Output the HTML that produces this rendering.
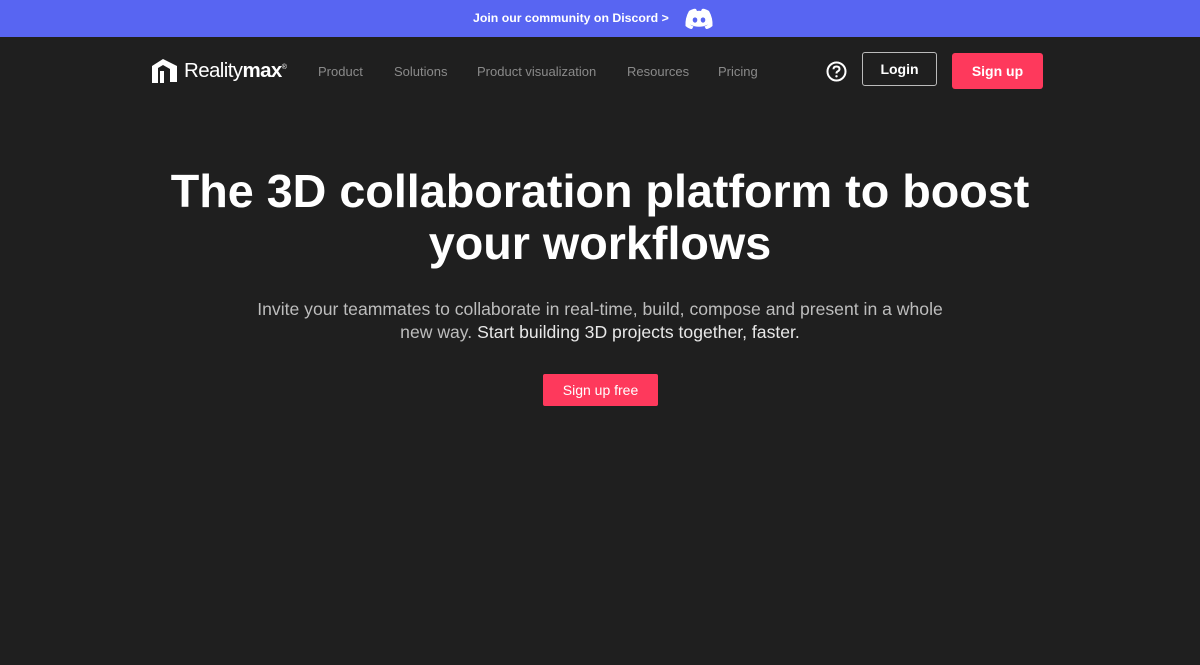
<!DOCTYPE html>
<html><head><meta charset="utf-8"><style>
*{margin:0;padding:0;box-sizing:border-box}
body{width:1200px;height:665px;background:#1f1f1f;font-family:"Liberation Sans",sans-serif;overflow:hidden;color:#fff;position:relative}
.top{height:37px;background:#5865f2;position:relative}
.top span{position:absolute;left:473px;top:11px;font-size:12.3px;font-weight:bold;color:#fff;white-space:nowrap}
.top svg{position:absolute;left:684px;top:8px}
nav{position:absolute;top:37px;left:0;width:1200px;height:68px}
.logo{position:absolute;left:151px;top:21px;display:flex;align-items:center;gap:5px;font-size:20.5px;letter-spacing:-0.6px}
.links a{position:absolute;top:27px;font-size:13px;color:#8a8a8a;text-decoration:none}
.help{position:absolute;left:826px;top:24px}
.login{position:absolute;left:862px;top:15px;width:75px;height:34px;border:1px solid #bbb;border-radius:3px;display:flex;align-items:center;justify-content:center;font-weight:bold;font-size:14px}
.signup{position:absolute;left:952px;top:16px;width:91px;height:36px;background:#fe395c;border-radius:3px;display:flex;align-items:center;justify-content:center;font-weight:bold;font-size:14px}
h1{position:absolute;top:165px;left:0;width:1200px;text-align:center;font-size:46.7px;line-height:52px;font-weight:bold}
p{position:absolute;top:298px;left:0;width:1200px;text-align:center;font-size:17.6px;line-height:23px;color:#bdbdbd}
p b{font-weight:normal;color:#e8e8e8}
.cta{position:absolute;left:543px;top:374px;width:115px;height:32px;background:#fe395c;border-radius:2px;display:flex;align-items:center;justify-content:center;font-size:14px}
</style></head><body>
<div class="top"><span>Join our community on Discord &gt;</span>
<svg width="30" height="22" viewBox="0 0 30 22"><path d="M5 3Q10 0 12 1L13 3Q15 2.5 17 3L18 1Q20 0 25 3Q29 10 28.5 18Q25 21 22 21L20.5 18.5Q23 17.5 24 16.5Q15 21 6 16.5Q7 17.5 9.5 18.5L8 21Q5 21 1.5 18Q1 10 5 3Z" fill="#fff"/><ellipse cx="11" cy="12" rx="2.3" ry="2.6" fill="#5865f2"/><ellipse cx="19" cy="12" rx="2.3" ry="2.6" fill="#5865f2"/></svg></div>
<nav>
<div class="logo"><svg width="28" height="26" viewBox="0 0 28 26"><path d="M1 8L12 1L26 8V24H19V11L12 7L7 10V25H1Z" fill="#fff"/><rect x="9" y="13" width="4" height="12" fill="#fff"/></svg><span>Reality<b>max</b><sup style="font-size:7px">®</sup></span></div>
<div class="links"><a style="left:318px">Product</a><a style="left:394px">Solutions</a><a style="left:477px">Product visualization</a><a style="left:627px">Resources</a><a style="left:718px">Pricing</a></div>
<svg class="help" width="21" height="21" viewBox="0 0 21 21"><circle cx="10.5" cy="10.5" r="9" fill="none" stroke="#fff" stroke-width="2"/><path d="M7.5 8.2Q7.5 5.5 10.5 5.5Q13.5 5.5 13.5 8Q13.5 9.5 11.5 10.5Q10.5 11 10.5 12.5" fill="none" stroke="#fff" stroke-width="2"/><circle cx="10.5" cy="15.3" r="1.2" fill="#fff"/></svg>
<div class="login">Login</div>
<div class="signup">Sign up</div>
</nav>
<h1>The 3D collaboration platform to boost<br>your workflows</h1>
<p>Invite your teammates to collaborate in real-time, build, compose and present in a whole<br>new way. <b>Start building 3D projects together, faster.</b></p>
<div class="cta">Sign up free</div>
</body></html>
